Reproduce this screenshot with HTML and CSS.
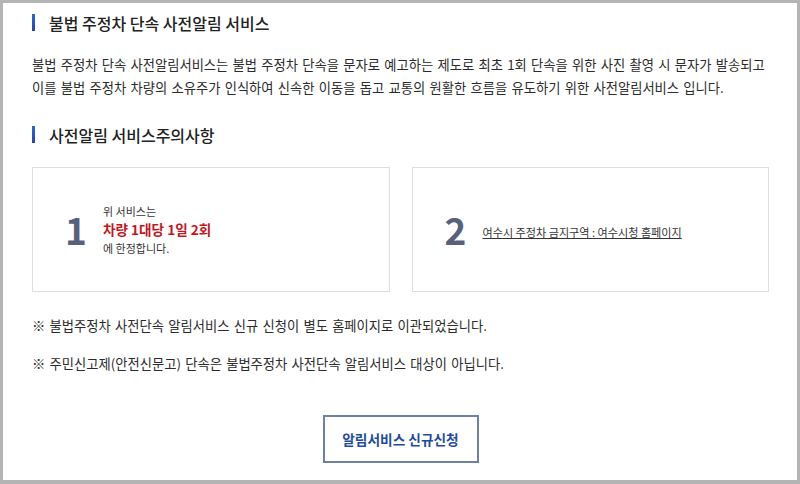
FILE: index.html
```html
<!DOCTYPE html>
<html>
<head>
<meta name="viewport" content="width=device-width, initial-scale=1.0">
  <title>불법 주정차 단속 사전알림 서비스</title>
  <link rel="stylesheet" href="styles.css">
</head>
<body>
  <div class="frame">
    <h2 class="title">불법 주정차 단속 사전알림 서비스</h2>
    <p class="intro">불법 주정차 단속 사전알림서비스는 불법 주정차 단속을 문자로 예고하는 제도로 최초 1회 단속을 위한 사진 촬영 시 문자가 발송되고<br>이를 불법 주정차 차량의 소유주가 인식하여 신속한 이동을 돕고 교통의 원활한 흐름을 유도하기 위한 사전알림서비스 입니다.</p>

    <h2 class="title second">사전알림 서비스주의사항</h2>
    <div class="notice-boxes">
      <div class="notice-box">
        <span class="num">1</span>
        <div class="notice-text">
          <p>위 서비스는</p>
          <p class="strong">차량 1대당 1일 2회</p>
          <p>에 한정합니다.</p>
        </div>
      </div>
      <div class="notice-box">
        <span class="num">2</span>
        <div class="notice-text">
          <a href="#" class="link">여수시 주정차 금지구역 : 여수시청 홈페이지</a>
        </div>
      </div>
    </div>

    <p class="note">※ 불법주정차 사전단속 알림서비스 신규 신청이 별도 홈페이지로 이관되었습니다.</p>
    <p class="note">※ 주민신고제(안전신문고) 단속은 불법주정차 사전단속 알림서비스 대상이 아닙니다.</p>

    <div class="btn-wrap">
      <a href="#" class="btn">알림서비스 신규신청</a>
    </div>
  </div>
</body>
</html>
```

FILE: styles.css
```css
body {
  margin: 0;
  font-family: "Noto Sans CJK KR", "Noto Sans", sans-serif;
  background-color: #fff;
}

.frame {
  box-sizing: border-box;
  width: 800px;
  height: 484px;
  border: 3px solid #b4b4b4;
  border-bottom-width: 4px;
  padding: 11px 28px 0 29px;
  background-color: #fff;
}

.title {
  position: relative;
  margin: 0;
  padding-left: 17px;
  font-size: 16px;
  font-weight: 500;
  line-height: 18px;
  color: #222;
}

/* blue marker before the headings */
.title::before {
  content: "";
  position: absolute;
  left: 0;
  top: 0;
  width: 3px;
  height: 17px;
  background: linear-gradient(#2f63e0, #1d45b8);
}

.title.second {
  margin-top: 27px;
}

.intro {
  margin: 21px 0 0;
  font-size: 13.3px;
  line-height: 23px;
  word-spacing: 1.3px;
  color: #2b2b2b;
}

.notice-boxes {
  display: flex;
  gap: 22px;
  margin-top: 23px;
}

.notice-box {
  box-sizing: border-box;
  display: flex;
  align-items: center;
  width: 358px;
  height: 125px;
  border: 1px solid #dedede;
  padding-left: 32px;
}

.num {
  width: 38px;
  font-size: 37px;
  font-weight: 700;
  line-height: 1;
  color: #57617b;
}

.notice-text p {
  margin: 0;
  font-size: 11px;
  line-height: 18px;
  color: #333;
}

.notice-text .strong {
  font-size: 13.6px;
  font-weight: 700;
  line-height: 19px;
  color: #c4161c;
}

.link {
  font-size: 11.1px;
  color: #333;
  text-decoration: underline;
}

.note {
  margin: 24px 0 0;
  font-size: 13.3px;
  line-height: 20px;
  word-spacing: 1.3px;
  color: #2b2b2b;
}

.note + .note {
  margin-top: 18px;
}

.btn-wrap {
  display: flex;
  justify-content: center;
  margin-top: 41px;
}

.btn {
  box-sizing: border-box;
  display: flex;
  align-items: center;
  justify-content: center;
  width: 156px;
  height: 48px;
  border: 2px solid #6e80a3;
  font-size: 13.7px;
  font-weight: 700;
  color: #1f4c9c;
  text-decoration: none;
}
```
